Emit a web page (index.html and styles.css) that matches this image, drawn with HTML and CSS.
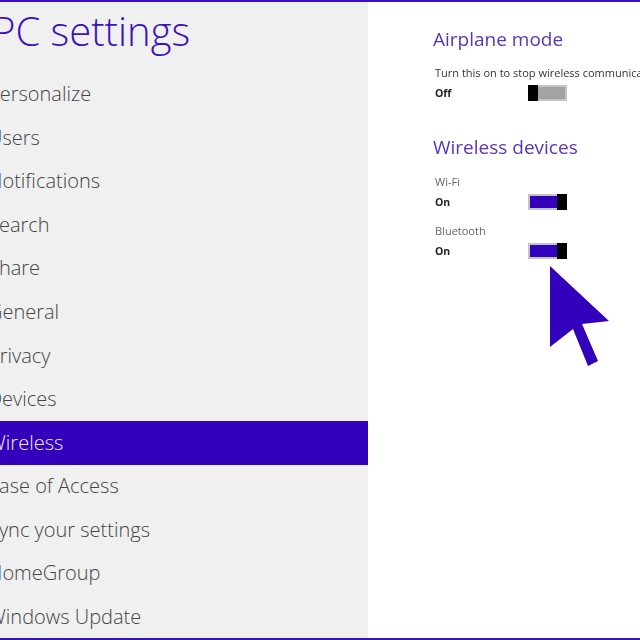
FILE: index.html
```html
<!DOCTYPE html>
<html lang="en">
<head>
<meta charset="utf-8">
<title>PC settings</title>
<link rel="stylesheet" href="styles.css">
</head>
<body>
<div class="screen">
  <aside class="sidebar">
    <h1 class="title">PC settings</h1>
    <ul class="nav">
      <li class="nav-item"><span class="nav-label">Personalize</span></li>
      <li class="nav-item"><span class="nav-label">Users</span></li>
      <li class="nav-item"><span class="nav-label">Notifications</span></li>
      <li class="nav-item"><span class="nav-label">Search</span></li>
      <li class="nav-item"><span class="nav-label">Share</span></li>
      <li class="nav-item"><span class="nav-label">General</span></li>
      <li class="nav-item"><span class="nav-label">Privacy</span></li>
      <li class="nav-item"><span class="nav-label">Devices</span></li>
      <li class="nav-item active"><span class="nav-label">Wireless</span></li>
      <li class="nav-item"><span class="nav-label">Ease of Access</span></li>
      <li class="nav-item"><span class="nav-label">Sync your settings</span></li>
      <li class="nav-item"><span class="nav-label">HomeGroup</span></li>
      <li class="nav-item"><span class="nav-label">Windows Update</span></li>
    </ul>
  </aside>
  <main class="content">
    <section class="group">
      <h2 class="heading">Airplane mode</h2>
      <div class="setting">
        <p class="caption dark">Turn this on to stop wireless communication</p>
        <div class="control">
          <span class="state">Off</span>
          <span class="toggle off"><span class="thumb"></span></span>
        </div>
      </div>
    </section>
    <section class="group">
      <h2 class="heading">Wireless devices</h2>
      <div class="setting">
        <p class="caption">Wi-Fi</p>
        <div class="control">
          <span class="state">On</span>
          <span class="toggle on"><span class="thumb"></span></span>
        </div>
      </div>
      <div class="setting">
        <p class="caption">Bluetooth</p>
        <div class="control">
          <span class="state">On</span>
          <span class="toggle on"><span class="thumb"></span></span>
        </div>
      </div>
    </section>
  </main>
  <svg class="cursor" width="64" height="104" viewBox="0 0 64 104" aria-hidden="true">
    <path d="M1 1 L60 56 L33 59 L49 96 L39 101 L24 64 L1 82 Z" fill="#3300bb"/>
  </svg>
</div>
</body>
</html>
```
FILE: styles.css
```css
* { box-sizing: border-box; }
html, body { margin: 0; padding: 0; }
body {
  width: 640px;
  height: 640px;
  overflow: hidden;
  background: #fff;
  font-family: "Open Sans", "Noto Sans", sans-serif;
}
.screen {
  position: relative;
  display: flex;
  width: 640px;
  height: 640px;
  overflow: hidden;
  border-top: 2px solid #3b10c0;
  border-bottom: 2px solid #3b10c0;
  filter: blur(0.5px);
}
.sidebar {
  flex: 0 0 368px;
  background: #f0f0f0;
  overflow: hidden;
}
.title {
  margin: 0 0 0 -8px;
  height: 71px;
  padding-top: 4px;
  font-size: 40px;
  line-height: 50px;
  font-weight: 300;
  color: #3b10c0;
  white-space: nowrap;
}
.nav { list-style: none; margin: 0; padding: 0; }
.nav-item {
  height: 43.55px;
  display: flex;
  align-items: center;
  padding-bottom: 2px;
  font-size: 20px;
  font-weight: 300;
  color: #444;
  white-space: nowrap;
}
.nav-label { margin-left: -12px; }
.nav-item.active { background: #3300bb; color: #eee; }
.content {
  flex: 1;
  padding: 22px 0 0 65px;
  overflow: hidden;
}
.group { margin-bottom: 29px; }
.heading {
  margin: 0 0 11px;
  font-size: 19px;
  line-height: 30px;
  font-weight: 400;
  color: #5a35b5;
  white-space: nowrap;
}
.setting { margin-bottom: 11px; padding-left: 2px; }
.group .setting:last-child { margin-bottom: 0; }
.group + .group .setting:first-of-type { padding-top: 1px; }
.caption {
  margin: 0;
  font-size: 11px;
  line-height: 16px;
  color: #666;
  white-space: nowrap;
}
.caption.dark { color: #333; }
.control {
  display: flex;
  align-items: center;
  height: 20px;
  margin-top: 2px;
}
.state {
  width: 93px;
  font-size: 10.5px;
  font-weight: 700;
  color: #222;
}
.toggle {
  position: relative;
  display: block;
  width: 39px;
  height: 16px;
  border: 2px solid #c4c4c4;
}
.toggle.off { background: #a3a3a3; }
.toggle.on { background: #3300bb; }
.thumb {
  position: absolute;
  top: -2px;
  width: 10px;
  height: 16px;
  background: #000;
}
.toggle.off .thumb { left: -2px; }
.toggle.on .thumb { right: -2px; }
.cursor {
  position: absolute;
  left: 549px;
  top: 263px;
}
```
